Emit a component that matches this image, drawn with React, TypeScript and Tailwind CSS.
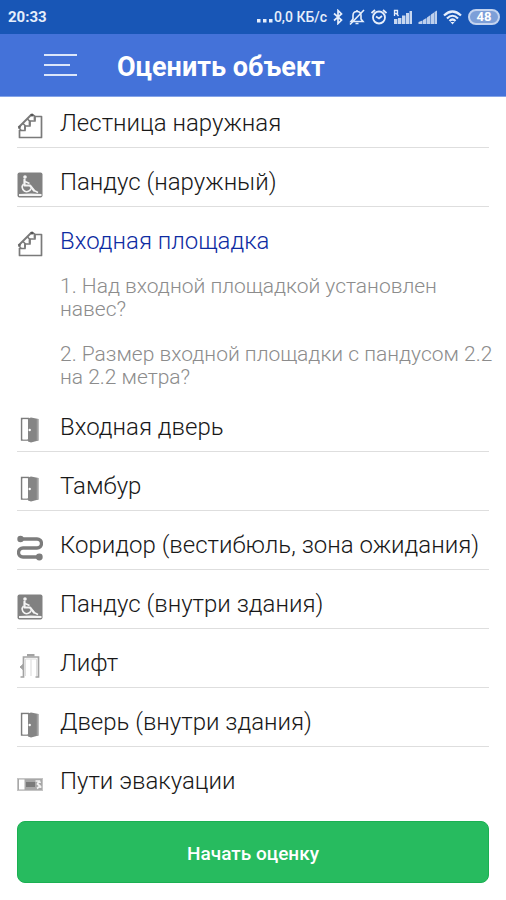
import React, { useState } from 'react';

type IconName = 'stairs' | 'ramp' | 'door' | 'corridor' | 'lift' | 'exit';

interface Section {
    id: string;
    title: string;
    icon: IconName;
    questions?: string[];
}

const sections: Section[] = [
    { id: 'stairs', title: 'Лестница наружная', icon: 'stairs' },
    { id: 'ramp-out', title: 'Пандус (наружный)', icon: 'ramp' },
    {
        id: 'porch',
        title: 'Входная площадка',
        icon: 'stairs',
        questions: [
            '1. Над входной площадкой установлен навес?',
            '2. Размер входной площадки с пандусом 2.2 на 2.2 метра?',
        ],
    },
    { id: 'entrance', title: 'Входная дверь', icon: 'door' },
    { id: 'tambour', title: 'Тамбур', icon: 'door' },
    { id: 'corridor', title: 'Коридор (вестибюль, зона ожидания)', icon: 'corridor' },
    { id: 'ramp-in', title: 'Пандус (внутри здания)', icon: 'ramp' },
    { id: 'lift', title: 'Лифт', icon: 'lift' },
    { id: 'door-in', title: 'Дверь (внутри здания)', icon: 'door' },
    { id: 'exit', title: 'Пути эвакуации', icon: 'exit' },
];

function SectionIcon({ name }: { name: IconName }) {
    return (
        <svg viewBox="0 0 26 26" className="w-[26px] h-[26px] shrink-0" fill="none" aria-hidden="true">
            {name === 'stairs' && (
                <g stroke="#7a7a7a" strokeWidth="1.7" strokeLinejoin="round">
                    <path d="M2.500 17V24.500H24.500V3.500H18V8H13V13H8V17.500H2.500" />
                    <path d="M1.500 14.500L14.500 1.500" strokeWidth="2" />
                    <path d="M15 1.500L17.500 3V7M10.500 6L12.500 8V12M6 10.500L8 12.500V16.500M1.500 14.500L4 17" />
                    <circle cx="15" cy="2" r="1.500" fill="#555" stroke="none" />
                    <circle cx="2.500" cy="14" r="1.300" fill="#666" stroke="none" />
                </g>
            )}
            {name === 'ramp' && (
                <g>
                    <rect x="0.500" y="0.500" width="25" height="25" rx="2" fill="#818181" />
                    <circle cx="8" cy="5" r="1.800" fill="#f4f4f4" />
                    <path d="M7.500 7.500V13.500H13L17 18.500" stroke="#f4f4f4" strokeWidth="2.200" strokeLinecap="round" strokeLinejoin="round" />
                    <path d="M8 9.500L12.500 11.500" stroke="#f4f4f4" strokeWidth="1.500" />
                    <path d="M6.500 12A4.500 4.500 0 1 0 14 16.500" stroke="#f4f4f4" strokeWidth="1.600" />
                    <path d="M2 22L14 21.500L24.500 22V24H2Z" fill="#f4f4f4" />
                    <path d="M17 18.500L21 20.500" stroke="#f4f4f4" strokeWidth="1.500" />
                </g>
            )}
            {name === 'door' && (
                <g>
                    <path d="M12 1.500H4.700V23H12" stroke="#7c7c7c" strokeWidth="1.700" />
                    <path d="M11 1.500L14 0.500L21.500 2V23.500L14 25.500L11 24.500Z" fill="#858585" />
                    <path d="M5.500 2.500H10.500V22.500H5.500Z" fill="#fff" />
                    <path d="M20.500 2V24" stroke="#a0a0a0" strokeWidth="1.500" />
                    <circle cx="12.700" cy="13" r="1.200" fill="#fff" />
                </g>
            )}
            {name === 'corridor' && (
                <g stroke="#7c7c7c">
                    <path d="M4 4H20A4.500 4.500 0 0 1 20 13H6A4.500 4.500 0 0 0 6 22H22" strokeWidth="3.400" />
                    <circle cx="3.500" cy="4" r="3.200" fill="#7c7c7c" stroke="none" />
                    <circle cx="22.300" cy="22" r="3.400" fill="#7c7c7c" stroke="none" />
                </g>
            )}
            {name === 'lift' && (
                <g stroke="#a3a3a3" strokeWidth="1.700">
                    <path d="M3.500 24H6.500V4H21.500V24H18.500" />
                    <path d="M8.500 23V6H19.500V23" stroke="#dedede" strokeWidth="1" />
                    <path d="M14 6V23" stroke="#e6e6e6" strokeWidth="1.500" />
                    <path d="M10 2.200H17.500" strokeWidth="2.400" />
                    <path d="M6 11.500L3 14L6 16.500Z" fill="#a3a3a3" strokeWidth="1" />
                </g>
            )}
            {name === 'exit' && (
                <g>
                    <rect x="0.500" y="7.500" width="25" height="12" fill="#a8a8a8" stroke="#c4c4c4" />
                    <rect x="2" y="8.500" width="5.500" height="10" fill="#fff" />
                    <path d="M9 13.500H18" stroke="#7a7a7a" strokeWidth="5" />
                    <path d="M18.500 10H22L20.500 13L23 15L20 17.500M23 10.500V12M23.500 15V17" stroke="#f2f2f2" strokeWidth="1.700" />
                </g>
            )}
        </svg>
    );
}

function StatusBar() {
    return (
        <div className="flex items-center justify-between h-[34px] pl-2 pr-1.5 bg-[#1856b6] text-[#e6eefb]">
            <span className="text-[15px] leading-5 font-bold">20:33</span>
            <div className="flex items-center gap-1.5">
                <div className="flex items-center gap-1.5">
                    <div className="flex items-center">
                        <svg viewBox="0 0 18 14" className="w-[18px] h-3.5" fill="currentColor" aria-hidden="true">
                            <rect x="1" y="9" width="3.500" height="3.500" />
                            <rect x="7" y="9" width="3.500" height="3.500" />
                            <rect x="13" y="9" width="3.500" height="3.500" />
                        </svg>
                        <span className="text-[14px] leading-5 font-medium">0,0 КБ/с</span>
                    </div>
                    <svg viewBox="0 0 10 16" className="w-2.5 h-4" fill="none" stroke="currentColor" strokeWidth="1.700" aria-hidden="true">
                        <path d="M1 4.500L8.500 11L5 14.500V1.500L8.500 5L1 11.500" />
                    </svg>
                </div>
                {/* Muted bell */}
                <svg viewBox="1 0 16 18" className="w-4 h-[18px]" fill="none" stroke="currentColor" strokeWidth="1.600" aria-hidden="true">
                    <path d="M3 13.500H15L13 11V7.500C13 5 11.500 3.500 9 3.500S5 5 5 7.500V11Z" />
                    <path d="M7.500 15.500H10.500M9 2V3.500M16 2L2 16.500" />
                </svg>
                <svg viewBox="1 0 16 18" className="w-4 h-[18px]" fill="none" stroke="currentColor" strokeWidth="1.800" aria-hidden="true">
                    <circle cx="9" cy="9.500" r="6" />
                    <path d="M1.500 5L5 2M16.500 5L13 2M6 8.500L9 10.500L12 8" />
                </svg>
                <svg viewBox="0 0 19 16" className="w-[19px] h-4" aria-hidden="true">
                    <path d="M1.500 7V1.500H4.500V4.500H1.500M3.500 4.500L5.500 7" fill="none" stroke="currentColor" strokeWidth="1.300" />
                    <g fill="currentColor" opacity="0.850">
                        <rect x="1" y="10" width="3.400" height="5" />
                        <rect x="5" y="9" width="3.400" height="6" />
                        <rect x="9" y="6.500" width="3.400" height="8.500" />
                        <rect x="13" y="4" width="3" height="11" />
                        <rect x="16.500" y="2" width="2.500" height="13" />
                    </g>
                </svg>
                <svg viewBox="0 0 19 16" className="w-[19px] h-4" fill="currentColor" opacity="0.800" aria-hidden="true">
                    <path d="M0.500 15V13L4.500 11.500V15ZM5 15V11L8.500 9V15ZM9 15V8.500L12.500 6V15ZM13 15V5.500L16 3.500V15ZM16.400 15V3L19 1.500V15Z" />
                </svg>
                <svg viewBox="0 0 19 16" className="w-[19px] h-4" fill="none" stroke="currentColor" strokeWidth="2.200" aria-hidden="true">
                    <path d="M1 6.500Q9.500 -1.500 18 6.500M4 9.500Q9.500 4 15 9.500M6.500 12Q9.500 9 12.500 12" />
                    <path d="M7.500 13H11.500L9.500 15.500Z" fill="currentColor" stroke="none" />
                </svg>
                <div className="flex items-center justify-center w-8 h-4 rounded-full border-2 border-[#c3d3ef] bg-[#7d9fd8]">
                    <span className="text-[13px] leading-3 font-bold text-white">48</span>
                </div>
            </div>
        </div>
    );
}

export default function App() {
    const [openId, setOpenId] = useState('porch');

    return (
        <div className="min-h-screen bg-white font-['Roboto',sans-serif]">
            <StatusBar />

            {/* Header */}
            <header className="flex items-center h-[63px] pl-11 gap-10 bg-[#4472d9] border-b border-[#84a4e8]">
                <button type="button" aria-label="Меню" className="text-[#dce6fa]">
                    <svg viewBox="0 0 33 24" className="w-[33px] h-6" stroke="currentColor" strokeWidth="2" aria-hidden="true">
                        <path d="M0 2H33M0 12H26M0 22H33" />
                    </svg>
                </button>
                <h1 className="pt-1 text-[27px] leading-8 font-bold text-white">Оценить объект</h1>
            </header>

            {/* Sections */}
            <main className="px-[17px]">
                <ul className="-mt-2">
                    {sections.map((section, i) => {
                        const isOpen = section.id === openId && !!section.questions;
                        const isLast = i === sections.length - 1;
                        return (
                            <li
                                key={section.id}
                                className={isOpen || isLast ? '' : 'border-b border-[#dedede]'}
                            >
                                <button
                                    type="button"
                                    aria-expanded={isOpen}
                                    onClick={() => setOpenId(isOpen ? '' : section.id)}
                                    className="flex items-end gap-[17px] w-full pt-[18px] pb-2 text-left"
                                >
                                    <SectionIcon name={section.icon} />
                                    <span className={`text-[24px] leading-8 font-light ${isOpen ? 'text-[#0d2ba2]' : 'text-[#181818]'}`}>
                                        {section.title}
                                    </span>
                                </button>
                                {isOpen && (
                                    <ol className="pl-[43px] pt-2.5 pb-1 -mr-2 space-y-[22px]">
                                        {section.questions?.map((question) => (
                                            <li key={question} className="text-[21px] leading-[23px] font-light text-[#8c8c8c]">
                                                {question}
                                            </li>
                                        ))}
                                    </ol>
                                )}
                            </li>
                        );
                    })}
                </ul>

                <button
                    type="button"
                    className="w-full h-[62px] pt-1 mt-4 mb-4 rounded-lg border border-[#1bb052] bg-[#27bb5f] text-[19px] leading-6 font-medium text-white"
                >
                    Начать оценку
                </button>
            </main>
        </div>
    );
}
